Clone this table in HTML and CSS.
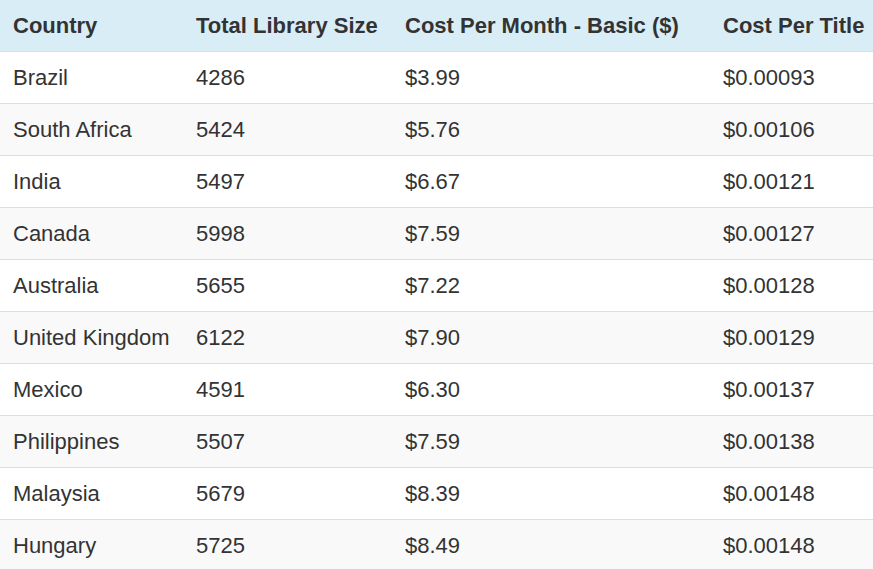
FILE: index.html
```html
<!DOCTYPE html>
<html>
<head>
<meta charset="utf-8">
<link rel="stylesheet" href="styles.css">
</head>
<body>
<table class="data">
  <colgroup>
    <col class="c1"><col class="c2"><col class="c3"><col class="c4">
  </colgroup>
  <thead>
    <tr><th>Country</th><th>Total Library Size</th><th>Cost Per Month - Basic ($)</th><th>Cost Per Title</th></tr>
  </thead>
  <tbody>
    <tr><td>Brazil</td><td>4286</td><td>$3.99</td><td>$0.00093</td></tr>
    <tr><td>South Africa</td><td>5424</td><td>$5.76</td><td>$0.00106</td></tr>
    <tr><td>India</td><td>5497</td><td>$6.67</td><td>$0.00121</td></tr>
    <tr><td>Canada</td><td>5998</td><td>$7.59</td><td>$0.00127</td></tr>
    <tr><td>Australia</td><td>5655</td><td>$7.22</td><td>$0.00128</td></tr>
    <tr><td>United Kingdom</td><td>6122</td><td>$7.90</td><td>$0.00129</td></tr>
    <tr><td>Mexico</td><td>4591</td><td>$6.30</td><td>$0.00137</td></tr>
    <tr><td>Philippines</td><td>5507</td><td>$7.59</td><td>$0.00138</td></tr>
    <tr><td>Malaysia</td><td>5679</td><td>$8.39</td><td>$0.00148</td></tr>
    <tr><td>Hungary</td><td>5725</td><td>$8.49</td><td>$0.00148</td></tr>
  </tbody>
</table>
</body>
</html>
```
FILE: styles.css
```css
html, body {
  margin: 0;
  padding: 0;
  background: #fff;
  overflow: hidden;
}
.data {
  width: 900px;
  table-layout: fixed;
  border-collapse: collapse;
  font-family: "Liberation Sans", Arial, sans-serif;
  font-size: 22px;
  color: #333;
}
.c1 { width: 183px; }
.c2 { width: 209px; }
.c3 { width: 318px; }
.c4 { width: 190px; }
.data th, .data td {
  padding: 0 13px;
  text-align: left;
  white-space: nowrap;
  vertical-align: middle;
}
.data th {
  height: 51px;
  background: #d9edf7;
  font-weight: bold;
}
.data td {
  height: 51px;
  border-top: 1px solid #ddd;
}
.data tbody tr:nth-child(even) td {
  background: #f9f9f9;
}
```
